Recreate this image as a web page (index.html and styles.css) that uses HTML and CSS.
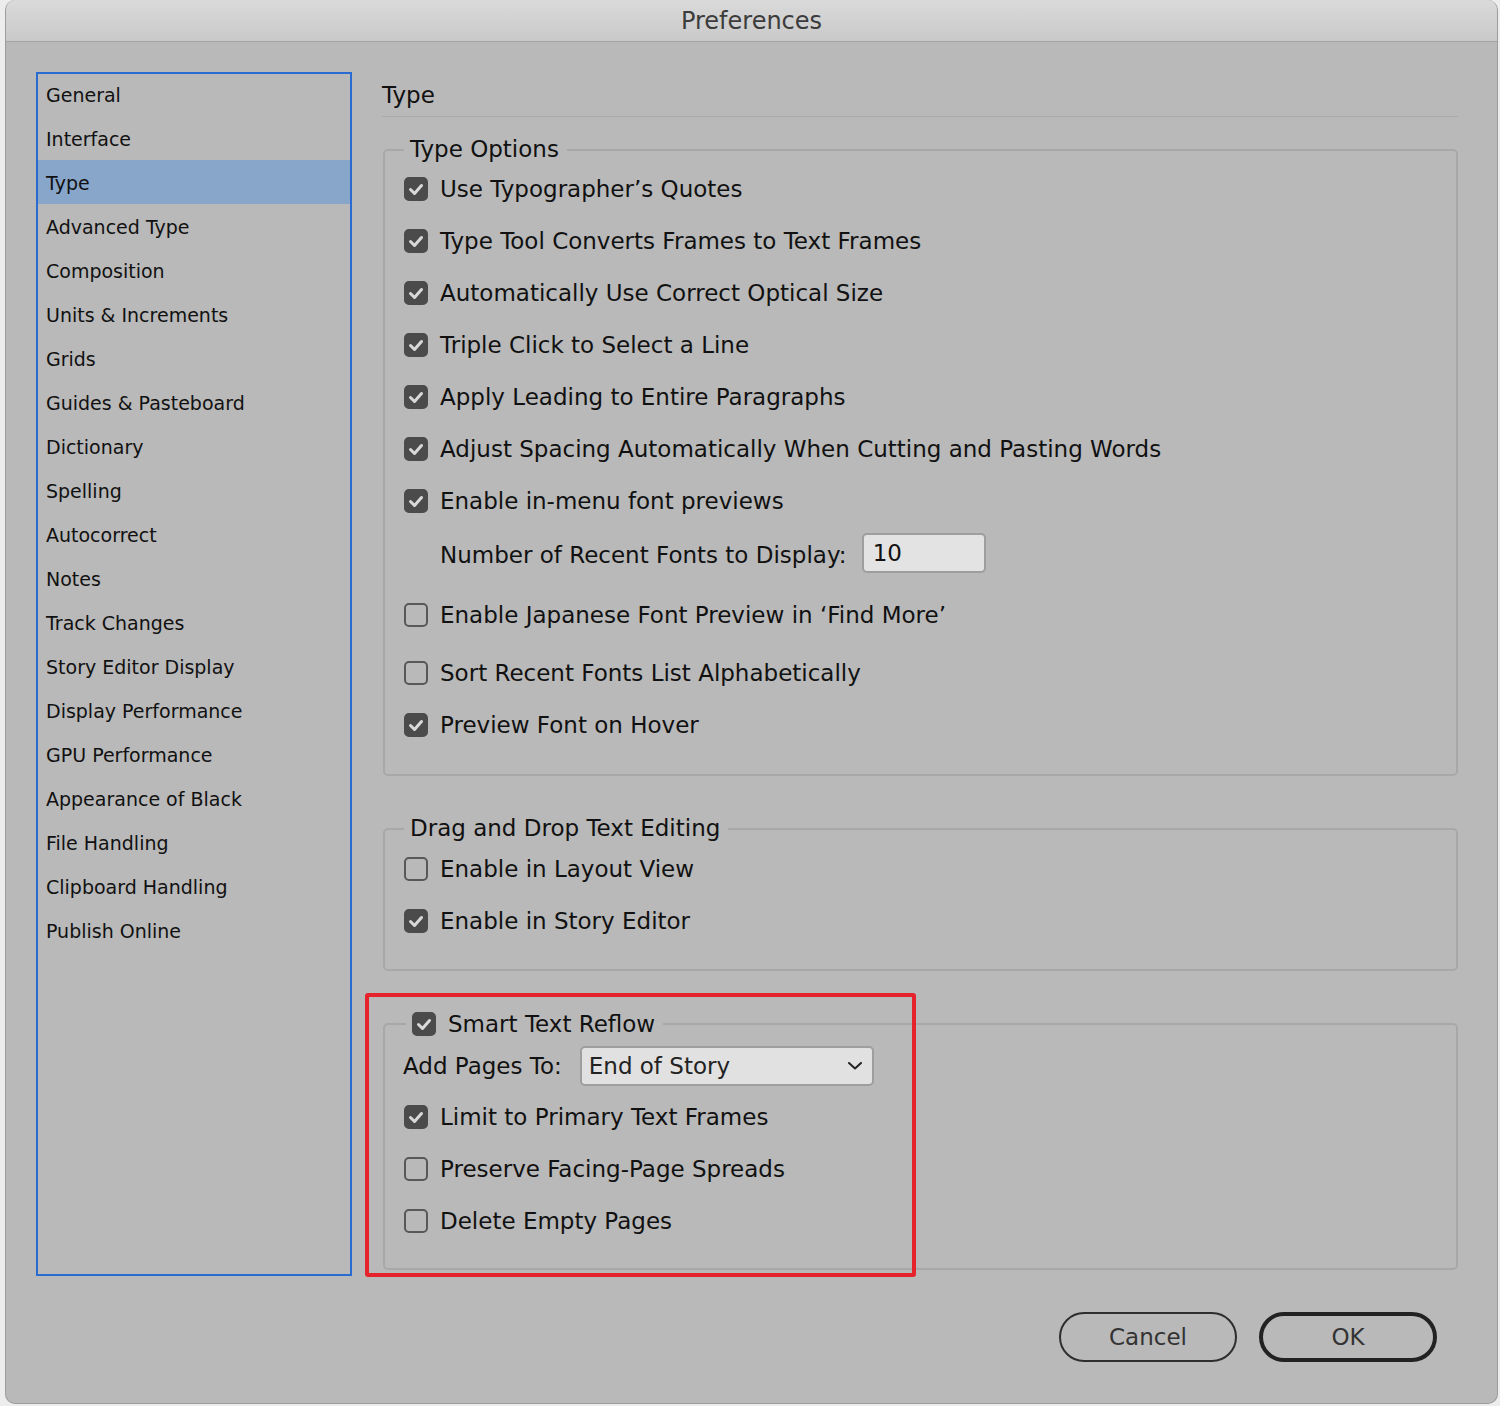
FILE: index.html
```html
<!DOCTYPE html>
<html>
<head>
<meta charset="utf-8">
<title>Preferences</title>
<link rel="stylesheet" href="styles.css">
</head>
<body>
<div class="window">
  <div class="titlebar">Preferences</div>
  <div class="window-body">
    <ul class="sidebar">
      <li class="nav-item">General</li>
      <li class="nav-item">Interface</li>
      <li class="nav-item nav-item--selected">Type</li>
      <li class="nav-item">Advanced Type</li>
      <li class="nav-item">Composition</li>
      <li class="nav-item">Units &amp; Increments</li>
      <li class="nav-item">Grids</li>
      <li class="nav-item">Guides &amp; Pasteboard</li>
      <li class="nav-item">Dictionary</li>
      <li class="nav-item">Spelling</li>
      <li class="nav-item">Autocorrect</li>
      <li class="nav-item">Notes</li>
      <li class="nav-item">Track Changes</li>
      <li class="nav-item">Story Editor Display</li>
      <li class="nav-item">Display Performance</li>
      <li class="nav-item">GPU Performance</li>
      <li class="nav-item">Appearance of Black</li>
      <li class="nav-item">File Handling</li>
      <li class="nav-item">Clipboard Handling</li>
      <li class="nav-item">Publish Online</li>
    </ul>

    <div class="main">
      <div class="pane-title">Type</div>

      <fieldset class="group group--first">
        <legend class="group-legend">Type Options</legend>
        <div class="row row--top"><span class="cb cb--on"><svg viewBox="0 0 24 24"><polyline points="6.5,12.5 10.5,16.5 17.5,8.5"/></svg></span><span class="label">Use Typographer’s Quotes</span></div>
        <div class="row"><span class="cb cb--on"><svg viewBox="0 0 24 24"><polyline points="6.5,12.5 10.5,16.5 17.5,8.5"/></svg></span><span class="label">Type Tool Converts Frames to Text Frames</span></div>
        <div class="row"><span class="cb cb--on"><svg viewBox="0 0 24 24"><polyline points="6.5,12.5 10.5,16.5 17.5,8.5"/></svg></span><span class="label">Automatically Use Correct Optical Size</span></div>
        <div class="row"><span class="cb cb--on"><svg viewBox="0 0 24 24"><polyline points="6.5,12.5 10.5,16.5 17.5,8.5"/></svg></span><span class="label">Triple Click to Select a Line</span></div>
        <div class="row"><span class="cb cb--on"><svg viewBox="0 0 24 24"><polyline points="6.5,12.5 10.5,16.5 17.5,8.5"/></svg></span><span class="label">Apply Leading to Entire Paragraphs</span></div>
        <div class="row"><span class="cb cb--on"><svg viewBox="0 0 24 24"><polyline points="6.5,12.5 10.5,16.5 17.5,8.5"/></svg></span><span class="label">Adjust Spacing Automatically When Cutting and Pasting Words</span></div>
        <div class="row"><span class="cb cb--on"><svg viewBox="0 0 24 24"><polyline points="6.5,12.5 10.5,16.5 17.5,8.5"/></svg></span><span class="label">Enable in-menu font previews</span></div>
        <div class="row row--field">
          <span class="label">Number of Recent Fonts to Display:</span>
          <span class="textbox">10</span>
        </div>
        <div class="row"><span class="cb"></span><span class="label">Enable Japanese Font Preview in ‘Find More’</span></div>
        <div class="row row--gap"><span class="cb"></span><span class="label">Sort Recent Fonts List Alphabetically</span></div>
        <div class="row"><span class="cb cb--on"><svg viewBox="0 0 24 24"><polyline points="6.5,12.5 10.5,16.5 17.5,8.5"/></svg></span><span class="label">Preview Font on Hover</span></div>
      </fieldset>

      <fieldset class="group group--second">
        <legend class="group-legend">Drag and Drop Text Editing</legend>
        <div class="row row--top-small"><span class="cb"></span><span class="label">Enable in Layout View</span></div>
        <div class="row"><span class="cb cb--on"><svg viewBox="0 0 24 24"><polyline points="6.5,12.5 10.5,16.5 17.5,8.5"/></svg></span><span class="label">Enable in Story Editor</span></div>
      </fieldset>

      <div class="highlight-wrap">
        <fieldset class="group group--inner">
          <legend class="group-legend group-legend--check"><span class="cb cb--on"><svg viewBox="0 0 24 24"><polyline points="6.5,12.5 10.5,16.5 17.5,8.5"/></svg></span><span class="label">Smart Text Reflow</span></legend>
          <div class="row row--select">
            <span class="label">Add Pages To:</span>
            <span class="select"><span class="select-value">End of Story</span><svg class="chevron" viewBox="0 0 14 8"><polyline points="1,1 7,6.5 13,1"/></svg></span>
          </div>
          <div class="row row--tight"><span class="cb cb--on"><svg viewBox="0 0 24 24"><polyline points="6.5,12.5 10.5,16.5 17.5,8.5"/></svg></span><span class="label">Limit to Primary Text Frames</span></div>
          <div class="row"><span class="cb"></span><span class="label">Preserve Facing-Page Spreads</span></div>
          <div class="row"><span class="cb"></span><span class="label">Delete Empty Pages</span></div>
        </fieldset>
        <div class="annotation"></div>
      </div>

      <div class="buttons">
        <button class="btn">Cancel</button>
        <button class="btn btn--default">OK</button>
      </div>
    </div>
  </div>
</div>
</body>
</html>
```

FILE: styles.css
```css
* { box-sizing: border-box; }

html, body {
  margin: 0;
  padding: 0;
}

body {
  width: 1500px;
  height: 1406px;
  background: #ededed;
  font-family: "DejaVu Sans", "Liberation Sans", sans-serif;
  color: #111;
  overflow: hidden;
}

.window {
  margin-left: 5px;
  width: 1493px;
  height: 1404px;
  background: #b9b9b9;
  border: 1px solid #9d9d9d;
  border-top: none;
  border-radius: 10px;
  overflow: hidden;
  display: flex;
  flex-direction: column;
}

.titlebar {
  height: 42px;
  flex: none;
  background: linear-gradient(#dadada, #c9c9c9);
  border-bottom: 1px solid #a3a3a3;
  text-align: center;
  line-height: 43px;
  font-size: 24px;
  color: #3c3c3c;
}

.window-body {
  display: flex;
  padding: 30px 0 0 30px;
  gap: 30px;
}

.sidebar {
  list-style: none;
  margin: 0;
  padding: 0;
  width: 316px;
  height: 1204px;
  border: 2px solid #2a6bd1;
  flex: none;
}

.nav-item {
  height: 44px;
  line-height: 46px;
  padding-left: 8px;
  font-size: 19px;
  color: #111;
}

.nav-item:first-child {
  margin-top: -2px;
}

.nav-item--selected {
  background: #87a6c9;
}

.main {
  width: 1076px;
  display: flex;
  flex-direction: column;
}

.pane-title {
  font-size: 23px;
  height: 45px;
  line-height: 42px;
  padding-top: 2px;
  border-bottom: 1px solid #a9a9a9;
}

.group {
  margin: 38px 0 0 1px;
  padding: 0 0 21px 19px;
  border: 2px solid #a8a8a8;
  border-radius: 5px;
}

.group--first {
  margin-top: 18px;
  padding-bottom: 23px;
}

.group--second {
  padding-bottom: 22px;
}

.group--inner {
  margin-top: 0;
}

.group-legend {
  padding: 0 8px 0 6px;
  height: 30px;
  line-height: 29px;
  font-size: 23px;
}

.group-legend--check {
  display: flex;
  align-items: center;
  gap: 12px;
  margin-left: 2px;
  padding-left: 6px;
}

.row {
  height: 52px;
  display: flex;
  align-items: center;
  gap: 12px;
}

.row--top {
  margin-top: -2px;
}

.row--top-small {
  margin-top: -1px;
}

.row--field {
  height: 56px;
  padding-left: 36px;
  margin-bottom: 6px;
  gap: 15px;
}

.row--field .textbox {
  margin-bottom: 4px;
}

.row--gap {
  margin-top: 6px;
}

.row--select {
  margin-top: 1px;
  margin-left: -1px;
  gap: 18px;
}

.row--tight {
  margin-top: -1px;
}

.label {
  font-size: 23px;
  white-space: nowrap;
}

.cb {
  width: 24px;
  height: 24px;
  flex: none;
  border: 2px solid #585858;
  border-radius: 5px;
  display: flex;
  align-items: center;
  justify-content: center;
}

.cb--on {
  background: #4b4b4b;
  border-color: #4b4b4b;
}

.cb svg {
  width: 24px;
  height: 24px;
  flex: none;
  fill: none;
  stroke: #d9d9d9;
  stroke-width: 3;
  stroke-linecap: round;
  stroke-linejoin: round;
}

.textbox {
  width: 124px;
  height: 40px;
  background: #e3e3e3;
  border: 2px solid #9e9e9e;
  border-radius: 5px;
  font-size: 23px;
  line-height: 36px;
  padding-left: 9px;
}

.select {
  width: 294px;
  height: 40px;
  background: #e1e1e1;
  border: 2px solid #9e9e9e;
  border-radius: 5px;
  display: flex;
  align-items: center;
  justify-content: space-between;
  padding: 0 10px 0 7px;
}

.select-value {
  font-size: 23px;
  color: #222;
}

.chevron {
  width: 14px;
  height: 8px;
  fill: none;
  stroke: #222;
  stroke-width: 2;
  stroke-linecap: round;
  stroke-linejoin: round;
}

.highlight-wrap {
  position: relative;
  margin-top: 38px;
}

.annotation {
  position: absolute;
  left: -17px;
  top: -16px;
  width: 551px;
  height: 284px;
  border: 4px solid #e6222d;
  border-radius: 3px;
  pointer-events: none;
}

.buttons {
  display: flex;
  justify-content: flex-end;
  gap: 22px;
  margin-top: 42px;
  padding-right: 21px;
}

.btn {
  width: 178px;
  height: 50px;
  border: 2px solid #2e2e2e;
  border-radius: 25px;
  background: transparent;
  font-family: "DejaVu Sans", "Liberation Sans", sans-serif;
  font-size: 23px;
  color: #333;
  padding: 0;
}

.btn--default {
  border: 4px solid #222;
}
```
